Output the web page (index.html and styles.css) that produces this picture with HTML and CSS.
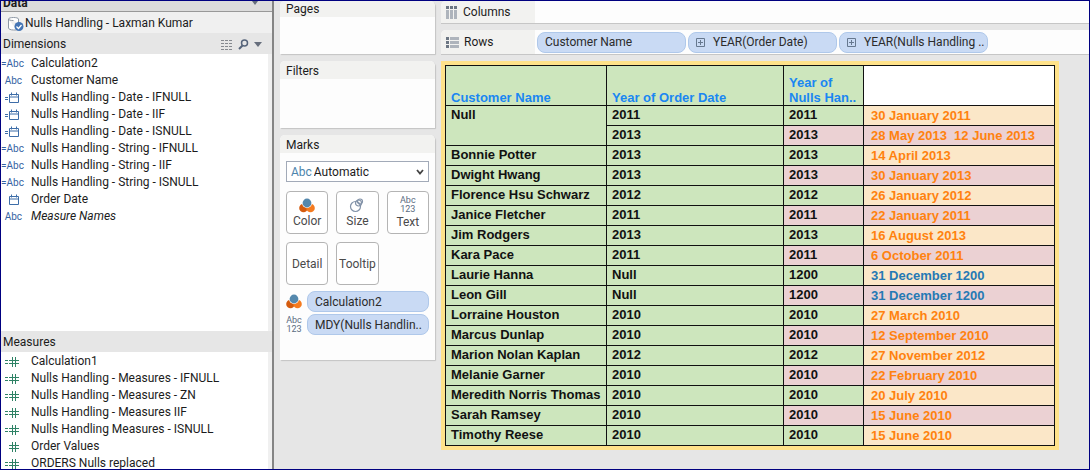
FILE: index.html
```
<!DOCTYPE html>
<html lang="en">
<head>
  <meta charset="utf-8">
  <title>Nulls Handling</title>
  <link rel="stylesheet" href="styles.css">
</head>
<body>
  <!-- shared icons -->
  <svg class="sprite" aria-hidden="true">
    <symbol id="calendar" viewBox="0 0 16 12">
      <path d="M5.5 2.5h9v8h-9zM5.5 5h9M7.5 .5v3M12.5 .5v3" fill="none" stroke="#3d6da8"/>
    </symbol>
    <symbol id="calc-calendar" viewBox="0 0 16 12">
      <path d="M5.5 2.5h9v8h-9zM5.5 5h9M7.5 .5v3M12.5 .5v3M1 5.5h3M1 7.5h3" fill="none" stroke="#3d6da8"/>
    </symbol>
    <symbol id="number" viewBox="0 0 16 12">
      <path d="M5 4.5h10M5 7.5h10M8.5 1v10M11.5 1v10" fill="none" stroke="#2e8265"/>
    </symbol>
    <symbol id="calc-number" viewBox="0 0 16 12">
      <path d="M5 4.5h10M5 7.5h10M8.5 1v10M11.5 1v10M1 4.5h3M1 7.5h3" fill="none" stroke="#2e8265"/>
    </symbol>
    <symbol id="color" viewBox="0 0 16 15">
      <circle cx="4.500" cy="10" r="4.300" fill="#d45b0e"/>
      <circle cx="11.500" cy="10" r="4.300" fill="#f47b20"/>
      <circle cx="8" cy="5" r="5" fill="#fff"/>
      <circle cx="8" cy="5" r="4.400" fill="#5588ad"/>
    </symbol>
    <symbol id="plus" viewBox="0 0 9 9">
      <path d="M.5 .5h8v8h-8zM2 4.500h5M4.500 2v5" fill="none" stroke="#66788f"/>
    </symbol>
  </svg>

  <div class="app">
    <div class="data-panel">
      <div class="data-title"><span>Data</span>
        <svg width="8" height="5"><path d="M1 0h6L4 4z" fill="#666e7c"/></svg>
      </div>
      <div class="source">
        <svg width="18" height="16" viewBox="0 0 18 16">
          <path d="M1.500 3v9c0 1 2 2 5 2h3M1.500 3c0-2 10-2 10 0v4M1.500 3c0 1 2 1.500 5 1.500" fill="#fff" stroke="#8e98a5"/>
          <circle cx="12" cy="10.500" r="4.500" fill="#4475b5"/>
          <path d="M9.500 10.500l2 2 3-3.500" fill="none" stroke="#fff" stroke-width="1.300"/>
        </svg>
        <span>Nulls Handling - Laxman Kumar</span>
      </div>
      <div class="section-head">
        <h2>Dimensions</h2>
        <svg width="12" height="10"><path d="M0 .5h12M0 3.500h12M0 6.500h12M0 9.500h12" stroke="#85898f" stroke-dasharray="3 1"/></svg>
        <svg width="11" height="11"><circle cx="6.500" cy="4" r="3" fill="none" stroke="#56647a" stroke-width="1.500"/><path d="M4.500 6.500L1 10" stroke="#56647a" stroke-width="2"/></svg>
        <svg width="8" height="5"><path d="M0 0h8L4 5z" fill="#666e7c"/></svg>
      </div>
      <ul class="fields dimensions">
        <li><span class="abc">=Abc</span>Calculation2</li>
        <li><span class="abc">Abc</span>Customer Name</li>
        <li><svg class="type"><use href="#calc-calendar"/></svg>Nulls Handling - Date - IFNULL</li>
        <li><svg class="type"><use href="#calc-calendar"/></svg>Nulls Handling - Date - IIF</li>
        <li><svg class="type"><use href="#calc-calendar"/></svg>Nulls Handling - Date - ISNULL</li>
        <li><span class="abc">=Abc</span>Nulls Handling - String - IFNULL</li>
        <li><span class="abc">=Abc</span>Nulls Handling - String - IIF</li>
        <li><span class="abc">=Abc</span>Nulls Handling - String - ISNULL</li>
        <li><svg class="type"><use href="#calendar"/></svg>Order Date</li>
        <li><span class="abc">Abc</span><em>Measure Names</em></li>
      </ul>
      <div class="section-head">
        <h2>Measures</h2>
      </div>
      <ul class="fields measures">
        <li><svg class="type"><use href="#calc-number"/></svg>Calculation1</li>
        <li><svg class="type"><use href="#calc-number"/></svg>Nulls Handling - Measures - IFNULL</li>
        <li><svg class="type"><use href="#calc-number"/></svg>Nulls Handling - Measures - ZN</li>
        <li><svg class="type"><use href="#calc-number"/></svg>Nulls Handling - Measures IIF</li>
        <li><svg class="type"><use href="#calc-number"/></svg>Nulls Handling Measures - ISNULL</li>
        <li><svg class="type"><use href="#number"/></svg>Order Values</li>
        <li><svg class="type"><use href="#calc-number"/></svg>ORDERS Nulls replaced</li>
      </ul>
    </div>

    <div class="cards">
      <div class="card pages"><h2>Pages</h2></div>
      <div class="card filters"><h2>Filters</h2></div>
      <div class="card marks">
        <h2>Marks</h2>
        <div class="marks-body">
          <div class="mark-type">
            <label for="mark">Abc</label>
            <select id="mark"><option>Automatic</option></select>
            <svg width="8" height="6"><path d="M1 1l3 3.500L7 1" fill="none" stroke="#444" stroke-width="1.800"/></svg>
          </div>
          <div class="tiles">
            <button><svg width="16" height="15"><use href="#color"/></svg>Color</button>
            <button><svg width="16" height="15"><g fill="none" stroke="#8292a8" stroke-width="1.200"><circle cx="6.500" cy="8.500" r="5"/><circle cx="9.500" cy="5" r="3"/><circle cx="11" cy="3.500" r="2.500"/></g></svg>Size</button>
            <button><span class="abc123">Abc<br>123</span>Text</button>
            <button>Detail</button>
            <button>Tooltip</button>
          </div>
          <div class="encoding"><svg width="16" height="15"><use href="#color"/></svg><span class="pill">Calculation2</span></div>
          <div class="encoding"><span class="abc123">Abc<br>123</span><span class="pill">MDY(Nulls Handlin..</span></div>
        </div>
      </div>
    </div>

    <div class="sheet">
      <div class="shelf columns">
        <div class="shelf-name">
          <svg width="12" height="13"><path d="M0 0h3v3H0zM4 0h3v3H4zM8 0h3v3H8z" fill="#6c7683"/><path d="M0 4h3v9H0zM4 4h3v9H4zM8 4h3v9H8z" fill="#aeb4bc"/></svg>
          Columns
        </div>
      </div>
      <div class="shelf rows">
        <div class="shelf-name">
          <svg width="13" height="12"><path d="M0 0h3v3H0zM0 4h3v3H0zM0 8h3v3H0z" fill="#6c7683"/><path d="M4 0h9v3H4zM4 4h9v3H4zM4 8h9v3H4z" fill="#aeb4bc"/></svg>
          Rows
        </div>
        <div class="pills">
          <span class="pill">Customer Name</span>
          <span class="pill"><svg width="9" height="9"><use href="#plus"/></svg>YEAR(Order Date)</span>
          <span class="pill"><svg width="9" height="9"><use href="#plus"/></svg>YEAR(Nulls Handling ..</span>
        </div>
      </div>

      <table class="view">
        <colgroup><col class="c-name"><col class="c-order"><col class="c-nulls"><col class="c-date"></colgroup>
        <thead>
          <tr><th>Customer Name</th><th>Year of Order Date</th><th>Year of Nulls Han..</th><td class="blank"></td></tr>
        </thead>
        <tbody>
          <tr><td rowspan="2">Null</td><td>2011</td><td>2011</td><td>30 January 2011</td></tr>
          <tr><td>2013</td><td>2013</td><td>28 May 2013&nbsp; 12 June 2013</td></tr>
          <tr><td>Bonnie Potter</td><td>2013</td><td>2013</td><td>14 April 2013</td></tr>
          <tr><td>Dwight Hwang</td><td>2013</td><td>2013</td><td>30 January 2013</td></tr>
          <tr><td>Florence Hsu Schwarz</td><td>2012</td><td>2012</td><td>26 January 2012</td></tr>
          <tr><td>Janice Fletcher</td><td>2011</td><td>2011</td><td>22 January 2011</td></tr>
          <tr><td>Jim Rodgers</td><td>2013</td><td>2013</td><td>16 August 2013</td></tr>
          <tr><td>Kara Pace</td><td>2011</td><td>2011</td><td>6 October 2011</td></tr>
          <tr class="replaced"><td>Laurie Hanna</td><td>Null</td><td>1200</td><td>31 December 1200</td></tr>
          <tr class="replaced"><td>Leon Gill</td><td>Null</td><td>1200</td><td>31 December 1200</td></tr>
          <tr><td>Lorraine Houston</td><td>2010</td><td>2010</td><td>27 March 2010</td></tr>
          <tr><td>Marcus Dunlap</td><td>2010</td><td>2010</td><td>12 September 2010</td></tr>
          <tr><td>Marion Nolan Kaplan</td><td>2012</td><td>2012</td><td>27 November 2012</td></tr>
          <tr><td>Melanie Garner</td><td>2010</td><td>2010</td><td>22 February 2010</td></tr>
          <tr><td>Meredith Norris Thomas</td><td>2010</td><td>2010</td><td>20 July 2010</td></tr>
          <tr><td>Sarah Ramsey</td><td>2010</td><td>2010</td><td>15 June 2010</td></tr>
          <tr><td>Timothy Reese</td><td>2010</td><td>2010</td><td>15 June 2010</td></tr>
        </tbody>
      </table>
    </div>
  </div>
</body>
</html>
```
FILE: styles.css
```
* {
  box-sizing: border-box;
}
body {
  margin: 0;
  font: 12px/17px Roboto, "Open Sans", sans-serif;
  color: #1c1c1c;
}
h2 {
  margin: 0;
  font-size: 12px;
  font-weight: normal;
}
ul {
  margin: 0;
  padding: 0;
  list-style: none;
}
svg {
  flex: none;
}
.sprite {
  display: none;
}
.app {
  display: flex;
  height: 100vh;
  border: 1px solid #000080;
  background: #e6e6e6;
  overflow: hidden;
}

/* data panel */
.data-panel {
  flex: none;
  display: flex;
  flex-direction: column;
  width: 273px;
  border-right: 2px solid #858585;
  background: #fff;
}
.data-title {
  flex: none;
  display: flex;
  justify-content: space-between;
  height: 11px;
  padding: 0 13px 0 2px;
  border-bottom: 1px solid #999;
  background: #dcdcdc;
  font-weight: bold;
  line-height: 4px;
  overflow: hidden;
}
.source {
  flex: none;
  display: flex;
  align-items: center;
  height: 21px;
  padding: 2px 0 0 6px;
  background: #f0f0f0;
}
.section-head {
  flex: none;
  display: flex;
  align-items: center;
  gap: 5px;
  height: 21px;
  padding: 2px 10px 0 2px;
  background: #e6e6e6;
}
.section-head h2 {
  flex: 1;
}
.fields {
  padding-top: 1px;
  border-right: 4px solid #f0f0f0;
  overflow: hidden;
}
.dimensions {
  flex: none;
  height: 277px;
}
.measures {
  flex: 1;
}
.fields li {
  display: flex;
  align-items: center;
  height: 17px;
  white-space: nowrap;
}
.type {
  width: 16px;
  height: 12px;
  margin: 0 11px 0 3px;
}
.abc {
  width: 30px;
  padding-right: 9px;
  color: #3563a3;
  font-size: 10px;
  text-align: right;
}

/* cards */
.cards {
  flex: none;
  display: flex;
  flex-direction: column;
  gap: 7px;
  width: 167px;
  padding: 0 6px;
}
.card {
  flex: none;
  border-radius: 5px 5px 0 0;
  background: #fdfdfd;
  box-shadow: 1px 1px 1px #c4c4c4;
}
.card h2 {
  height: 18px;
  padding-left: 6px;
  border-radius: 5px 5px 0 0;
  background: #f2f2f0;
  line-height: 21px;
}
.pages {
  height: 53px;
}
.pages h2 {
  height: 16px;
  line-height: 17px;
}
.filters {
  height: 67px;
}
.marks {
  height: 225px;
}
.marks-body {
  padding: 8px 6px;
}
.mark-type {
  display: flex;
  align-items: center;
  height: 21px;
  padding: 1px 4px 0;
  border: 1px solid #a2aab8;
  background: #fff;
}
.mark-type label {
  color: #4b84ac;
}
.mark-type select {
  flex: 1;
  margin-left: 2px;
  padding: 0;
  border: 0;
  background: none;
  color: inherit;
  font: inherit;
  appearance: none;
}
.tiles {
  display: grid;
  grid-template-columns: repeat(3, 1fr);
  gap: 8px;
  margin: 9px 0 6px;
}
.tiles button {
  display: flex;
  flex-direction: column;
  align-items: center;
  justify-content: center;
  height: 43px;
  padding: 2px 0 0;
  border: 1px solid #b4b4b4;
  border-radius: 4px;
  background: #fff;
  color: #4a4a4a;
  font: inherit;
}
.abc123 {
  color: #5b6b82;
  font-size: 9px;
  line-height: 9px;
  text-align: center;
}
.encoding {
  display: grid;
  grid-template-columns: 16px 1fr;
  align-items: center;
  gap: 5px;
  margin-bottom: 2px;
}
.pill {
  display: flex;
  align-items: center;
  height: 21px;
  padding: 1px 0 0 7px;
  border: 1px solid #afc8ea;
  border-radius: 8px;
  background: #c9daf4;
  color: #2b2b2b;
  white-space: nowrap;
}

/* shelves and view */
.sheet {
  flex: 1;
  min-width: 0;
}
.shelf {
  display: flex;
  align-items: center;
  height: 25px;
  margin-bottom: 6px;
  border-bottom: 1px solid #c6c6c6;
  border-radius: 5px 0 0 0;
  background: #fdfdfd;
  overflow: hidden;
}
.columns {
  height: 23px;
}
.shelf-name {
  flex: none;
  display: flex;
  align-items: center;
  gap: 5px;
  width: 94px;
  height: 100%;
  padding: 1px 0 0 5px;
  background: #f2f2f0;
}
.pills {
  display: flex;
  gap: 2px;
  padding-left: 2px;
}
.pills .pill {
  width: 149px;
}
.pills svg {
  margin-right: 8px;
}
.view {
  table-layout: fixed;
  width: 610px;
  margin: 10px 4px 4px;
  border-collapse: collapse;
  outline: 4px solid #ffe28a;
  background: #cde6bd;
  color: #111;
  font: bold 13px/15px "Liberation Sans", Arial, sans-serif;
}
.c-name {
  width: 161px;
}
.c-order {
  width: 177px;
}
.c-nulls {
  width: 80px;
}
.view th,
.view td {
  padding: 1px 0 3px 5px;
  border: 1px solid #111;
  text-align: left;
  vertical-align: top;
  white-space: nowrap;
}
.view th {
  height: 40px;
  padding-bottom: 0;
  color: #1a87f2;
  vertical-align: bottom;
  white-space: normal;
}
.view .blank {
  background: #fff;
}
.view tbody td:last-child {
  padding: 2px 0 2px 7px;
  background: #fbe7c8;
  color: #ff820f;
}
.view tbody tr:nth-child(even) td:nth-last-child(-n+2) {
  background: #ebd1d3;
}
.view tbody .replaced td:last-child {
  color: #2579b4;
}
```
